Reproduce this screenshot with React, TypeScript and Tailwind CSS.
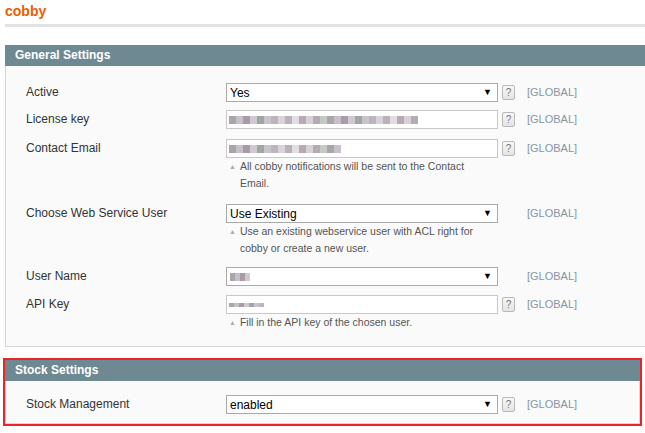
import React from "react";

const blurColors = [
  "#c9c4cc", "#b8b2b9", "#d6d2d8", "#a9a6ab", "#cfcad0", "#bdb5bd", "#e2dfe3",
  "#b1adb2", "#c7c0c8", "#9fa7a3", "#d9d4db", "#b9a9b5", "#c4c9c6", "#a99aa8",
];

function Blur({ cells, cell = 7, height = 8 }: { cells: number; cell?: number; height?: number }) {
  return (
    <span className="flex items-center">
      {Array.from({ length: cells }).map((_, i) => (
        <span
          key={i}
          className="block"
          style={{ width: cell, height, background: blurColors[(i * 5 + 3) % blurColors.length] }}
        />
      ))}
    </span>
  );
}

function Help() {
  return (
    <span className="ml-[4px] flex h-[15px] w-[13px] items-center justify-center rounded-[2px] border border-[#b9b9b9] bg-gradient-to-b from-[#f7f7f7] to-[#e4e4e4] text-[10px] leading-none text-[#777]">
      ?
    </span>
  );
}

function Scope() {
  return <span className="text-[11px] leading-[19px] text-[#8696a2]">[GLOBAL]</span>;
}

function Select({ children }: { children: React.ReactNode }) {
  return (
    <div className="flex h-[19px] w-[272px] items-center justify-between border border-[#aaaaaa] bg-white pl-[3px] pr-[5px] text-[12px] text-black">
      <span className="flex items-center">{children}</span>
      <span className="text-[9px] leading-none">▼</span>
    </div>
  );
}

function Input({ children }: { children: React.ReactNode }) {
  return (
    <div className="flex h-[19px] w-[272px] items-center border border-[#c8c8c8] bg-white pl-[2px] text-[12px]">
      {children}
    </div>
  );
}

function Note({ children }: { children: React.ReactNode }) {
  return (
    <div className="flex w-[250px] gap-[4px] pl-[3px] text-[10.5px] leading-[17px] text-[#555]">
      <span className="text-[7px] text-[#aab]">▲</span>
      <span>{children}</span>
    </div>
  );
}

function Row({
  label,
  control,
  help = true,
  note,
  className = "",
}: {
  label: string;
  control: React.ReactNode;
  help?: boolean;
  note?: React.ReactNode;
  className?: string;
}) {
  return (
    <div className={`flex items-start ${className}`}>
      <div className="w-[220px] pl-[20px] text-[12px] leading-[19px] text-[#333]">{label}</div>
      <div className="flex flex-col">
        {control}
        {note}
      </div>
      <div className="flex h-[19px] w-[29px] items-center">{help && <Help />}</div>
      <Scope />
    </div>
  );
}

function Header({ title }: { title: string }) {
  return (
    <div className="h-[21px] bg-[#6f8992] pl-[10px] text-[12px] font-bold leading-[21px] text-white">{title}</div>
  );
}

export default function App() {
  return (
    <div className="h-[433px] w-[645px] overflow-hidden bg-white font-['Liberation_Sans',Arial,sans-serif]">
      <div className="w-[660px] pl-[5px]">
        <div className="pt-[3px] text-[14px] font-bold leading-[17px] text-[#eb5e00]">cobby</div>
        <div className="mt-[4px] h-[3px] bg-[#e2e2e2]" />

        <div className="mt-[18px] border-b border-[#d6d6d6]">
          <Header title="General Settings" />
          <div className="border-l border-[#d6d6d6] bg-[#fafafa] pb-[15px] pt-[17px]">
            <Row label="Active" control={<Select>Yes</Select>} />
            <Row className="mt-[8px]" label="License key" control={<Input><Blur cells={27} /></Input>} />
            <Row
              className="mt-[10px]"
              label="Contact Email"
              control={<Input><Blur cells={16} /></Input>}
              note={<Note>All cobby notifications will be sent to the Contact Email.</Note>}
            />
            <Row
              className="mt-[12px]"
              help={false}
              label="Choose Web Service User"
              control={<Select>Use Existing</Select>}
              note={<Note>Use an existing webservice user with ACL right for cobby or create a new user.</Note>}
            />
            <Row className="mt-[10px]" help={false} label="User Name" control={<Select><Blur cells={4} cell={5} /></Select>} />
            <Row
              className="mt-[9px]"
              label="API Key"
              control={<Input><Blur cells={7} cell={5} height={4} /></Input>}
              note={<Note>Fill in the API key of the chosen user.</Note>}
            />
          </div>
        </div>

        <div className="-ml-[2px] mt-[11px] w-[639px] border-2 border-[#e8262a]">
          <div className="border-b border-[#d6d6d6]">
            <Header title="Stock Settings" />
            <div className="border-x border-[#d6d6d6] bg-[#fafafa] pb-[9px] pt-[14px]">
              <Row label="Stock Management" control={<Select>enabled</Select>} />
            </div>
          </div>
        </div>
      </div>
    </div>
  );
}
